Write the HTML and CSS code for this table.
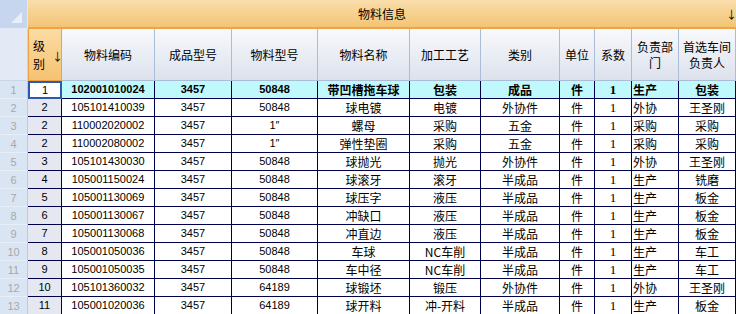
FILE: index.html
```html
<!DOCTYPE html>
<html>
<head>
<meta charset="utf-8">
<link rel="stylesheet" href="styles.css">
</head>
<body>
<div class="grid">
  <div class="corner"><span class="tri"></span></div>
  <div class="group">物料信息<span class="garrow">↓</span></div>

  <div class="rh-head"></div>
  <div class="ch sorted"><span class="two">级<br>别</span><span class="sarrow">↓</span></div>
  <div class="ch">物料编码</div>
  <div class="ch">成品型号</div>
  <div class="ch">物料型号</div>
  <div class="ch">物料名称</div>
  <div class="ch">加工工艺</div>
  <div class="ch">类别</div>
  <div class="ch">单位</div>
  <div class="ch">系数</div>
  <div class="ch">负责部<br>门</div>
  <div class="ch">首选车间<br>负责人</div>

  <div class="rh">1</div>
  <div class="c lv active sel">1</div>
  <div class="c num sel b">102001010024</div>
  <div class="c num sel b">3457</div>
  <div class="c num sel b">50848</div>
  <div class="c sel b">带凹槽拖车球</div>
  <div class="c sel b">包装</div>
  <div class="c sel b">成品</div>
  <div class="c sel b">件</div>
  <div class="c ser sel b">1</div>
  <div class="c left sel b">生产</div>
  <div class="c sel b">包装</div>

  <div class="rh">2</div><div class="c lv num">2</div><div class="c num">105101410039</div><div class="c num">3457</div><div class="c num">50848</div><div class="c">球电镀</div><div class="c">电镀</div><div class="c">外协件</div><div class="c">件</div><div class="c ser">1</div><div class="c left">外协</div><div class="c">王圣刚</div>
  <div class="rh">3</div><div class="c lv num">2</div><div class="c num">110002020002</div><div class="c num">3457</div><div class="c num">1″</div><div class="c">螺母</div><div class="c">采购</div><div class="c">五金</div><div class="c">件</div><div class="c ser">1</div><div class="c left">采购</div><div class="c">采购</div>
  <div class="rh">4</div><div class="c lv num">2</div><div class="c num">110002080002</div><div class="c num">3457</div><div class="c num">1″</div><div class="c">弹性垫圈</div><div class="c">采购</div><div class="c">五金</div><div class="c">件</div><div class="c ser">1</div><div class="c left">采购</div><div class="c">采购</div>
  <div class="rh">5</div><div class="c lv num">3</div><div class="c num">105101430030</div><div class="c num">3457</div><div class="c num">50848</div><div class="c">球抛光</div><div class="c">抛光</div><div class="c">外协件</div><div class="c">件</div><div class="c ser">1</div><div class="c left">外协</div><div class="c">王圣刚</div>
  <div class="rh">6</div><div class="c lv num">4</div><div class="c num">105001150024</div><div class="c num">3457</div><div class="c num">50848</div><div class="c">球滚牙</div><div class="c">滚牙</div><div class="c">半成品</div><div class="c">件</div><div class="c ser">1</div><div class="c left">生产</div><div class="c">铣磨</div>
  <div class="rh">7</div><div class="c lv num">5</div><div class="c num">105001130069</div><div class="c num">3457</div><div class="c num">50848</div><div class="c">球压字</div><div class="c">液压</div><div class="c">半成品</div><div class="c">件</div><div class="c ser">1</div><div class="c left">生产</div><div class="c">板金</div>
  <div class="rh">8</div><div class="c lv num">6</div><div class="c num">105001130067</div><div class="c num">3457</div><div class="c num">50848</div><div class="c">冲缺口</div><div class="c">液压</div><div class="c">半成品</div><div class="c">件</div><div class="c ser">1</div><div class="c left">生产</div><div class="c">板金</div>
  <div class="rh">9</div><div class="c lv num">7</div><div class="c num">105001130068</div><div class="c num">3457</div><div class="c num">50848</div><div class="c">冲直边</div><div class="c">液压</div><div class="c">半成品</div><div class="c">件</div><div class="c ser">1</div><div class="c left">生产</div><div class="c">板金</div>
  <div class="rh">10</div><div class="c lv num">8</div><div class="c num">105001050036</div><div class="c num">3457</div><div class="c num">50848</div><div class="c">车球</div><div class="c">NC车削</div><div class="c">半成品</div><div class="c">件</div><div class="c ser">1</div><div class="c left">生产</div><div class="c">车工</div>
  <div class="rh">11</div><div class="c lv num">9</div><div class="c num">105001050035</div><div class="c num">3457</div><div class="c num">50848</div><div class="c">车中径</div><div class="c">NC车削</div><div class="c">半成品</div><div class="c">件</div><div class="c ser">1</div><div class="c left">生产</div><div class="c">车工</div>
  <div class="rh">12</div><div class="c lv num">10</div><div class="c num">105101360032</div><div class="c num">3457</div><div class="c num">64189</div><div class="c">球锻坯</div><div class="c">锻压</div><div class="c">外协件</div><div class="c">件</div><div class="c ser">1</div><div class="c left">外协</div><div class="c">王圣刚</div>
  <div class="rh">13</div><div class="c lv num">11</div><div class="c num">105001020036</div><div class="c num">3457</div><div class="c num">64189</div><div class="c">球开料</div><div class="c">冲-开料</div><div class="c">半成品</div><div class="c">件</div><div class="c ser">1</div><div class="c left">生产</div><div class="c">板金</div>
</div>
</body>
</html>
```

FILE: styles.css
```css
html, body {
  margin: 0;
  padding: 0;
  background: #ffffff;
  overflow: hidden;
}
body {
  font-family: "Noto Sans CJK SC", "Liberation Sans", sans-serif;
  font-size: 12px;
  color: #000;
}
.grid {
  display: grid;
  grid-template-columns: 28px 34px 93px 77px 86px 92px 71px 79px 35px 37px 47px 57px;
  grid-template-rows: 29px 52px repeat(13, 18px);
  width: 736px;
}
.corner {
  background: #c6d6ee;
  border-right: 1px solid #dfe8f5;
  border-bottom: 1px solid #dfe8f5;
  position: relative;
  box-sizing: border-box;
}
.tri {
  position: absolute;
  right: 5px;
  bottom: 5px;
  width: 0;
  height: 0;
  border-left: 11px solid transparent;
  border-bottom: 11px solid #e9eff8;
}
.group {
  grid-column: 2 / 13;
  background: linear-gradient(#f9deab, #f4c474);
  border-bottom: 2px solid #f0a448;
  box-sizing: border-box;
  display: flex;
  align-items: center;
  justify-content: center;
  font-size: 12px;
  position: relative;
}
.garrow {
  position: absolute;
  right: -1px;
  top: 6px;
  font-size: 11px;
}
.rh-head {
  background: #e3eaf5;
  border-right: 1px solid #c9d6ea;
  border-bottom: 1px solid #c9d6ea;
}
.ch {
  background: linear-gradient(#f8f9fc, #dce1ec);
  border-right: 1px solid #a9bcd8;
  border-bottom: 1px solid #a9bcd8;
  display: flex;
  align-items: center;
  justify-content: center;
  text-align: center;
  line-height: 16px;
  font-size: 12px;
}
.ch.sorted {
  background: linear-gradient(#fbdca3, #f6c272);
  border: 1px solid #f0a040;
  border-top: none;
  gap: 7px;
  justify-content: flex-start;
  padding-left: 4px;
}
.two { line-height: 18px; }
.sarrow { font-size: 11px; margin-top: 3px; }
.rh {
  background: #dae5f4;
  color: #a8a8a8;
  border-right: 1px solid #b8cae4;
  border-bottom: 1px solid #e8eef8;
  display: flex;
  align-items: center;
  justify-content: center;
  font-family: "Liberation Sans", sans-serif;
  font-size: 11px;
}
.c {
  border-right: 1px solid #00004a;
  border-bottom: 1px solid #00004a;
  display: flex;
  align-items: center;
  justify-content: center;
  white-space: nowrap;
  overflow: hidden;
  line-height: 17px;
}
.num {
  font-family: "Liberation Sans", sans-serif;
  font-size: 11px;
}
.ser {
  font-family: "Liberation Serif", serif;
  font-size: 13px;
}
.left { justify-content: flex-start; padding-left: 1px; }
.lv { background: #e5e8f1; }
.sel { background: #bff9fc; }
.b { font-weight: bold; }
.lv.active {
  background: #ffffff;
  border: 2px solid #2a5bb0;
  font-family: "Liberation Sans", sans-serif;
  font-size: 11px;
}
```
